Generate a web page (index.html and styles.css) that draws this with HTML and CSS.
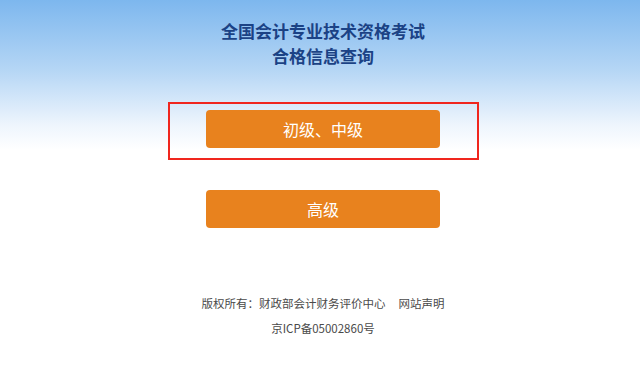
FILE: index.html
```html
<!DOCTYPE html>
<html lang="zh-CN">

<head>
    <meta charset="UTF-8">
    <meta name="viewport" content="width=device-width, initial-scale=1.0">
    <title>合格信息查询</title>
    <link rel="stylesheet" href="styles.css">
</head>

<body>
    <div class="page">
        <div class="header">
            <h1>全国会计专业技术资格考试<br>合格信息查询</h1>
        </div>

        <div class="menu">
            <div class="highlight">
                <a href="#" class="btn">初级、中级</a>
            </div>
            <a href="#" class="btn btn-senior">高级</a>
        </div>

        <!-- Footer -->
        <div class="footer">
            <p>版权所有：财政部会计财务评价中心<span class="gap"></span>网站声明</p>
            <p>京ICP备05002860号</p>
        </div>
    </div>
</body>

</html>
```

FILE: styles.css
```css
body {
    margin: 0;
    padding: 0;
    height: 366px;
    overflow: hidden;
    font-family: "Noto Sans CJK SC", "Noto Sans", sans-serif;
    background: #fff linear-gradient(to bottom, #7db7ee 0, #b5d6f5 70px, #eef5fd 125px, #ffffff 150px) no-repeat;
    background-size: 100% 160px;
}

.page {
    padding-left: 6px;
    display: flex;
    flex-direction: column;
    align-items: center;
}

.header {
    padding-top: 18px;
    text-align: center;
}

.header h1 {
    margin: 0;
    font-size: 17px;
    line-height: 25px;
    font-weight: bold;
    color: #1b4285;
}

.menu {
    margin-top: 34px;
    display: flex;
    flex-direction: column;
    align-items: center;
}

/* red frame round the first button */
.highlight {
    width: 307px;
    padding: 6px 0 10px;
    border: 2px solid #f0261e;
    display: flex;
    justify-content: center;
}

.btn {
    display: block;
    width: 234px;
    height: 38px;
    line-height: 38px;
    text-align: center;
    background-color: #e8821e;
    color: #fff;
    font-size: 16px;
    text-decoration: none;
    border-radius: 4px;
}

.btn-senior {
    margin-top: 30px;
}

.footer {
    margin-top: 63px;
    text-align: center;
    color: #4a4a4a;
    font-size: 11.5px;
}

.footer p {
    margin: 0;
    line-height: 25px;
}

.footer .gap {
    display: inline-block;
    width: 13px;
}
```
